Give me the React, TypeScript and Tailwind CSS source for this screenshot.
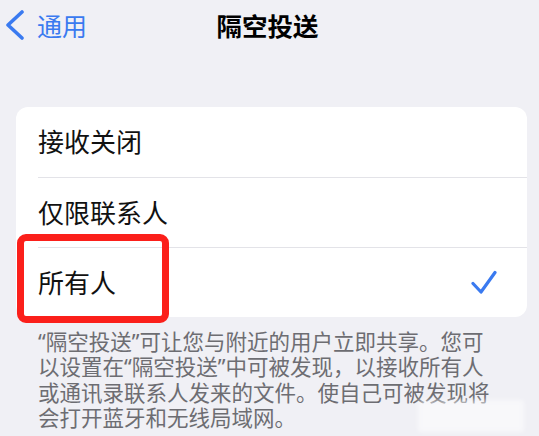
import React from "react";

const font = { fontFamily: '"Noto Sans CJK SC", "Noto Sans", sans-serif' };
const footerFont = { fontFamily: '"Noto Sans", "Noto Sans CJK SC", sans-serif' };

export default function App() {
  return (
    <div
      className="w-[539px] h-[436px] bg-[#f0f0f5] overflow-hidden relative"
      style={font}
    >
      {/* Nav bar */}
      <div className="relative h-[50px] flex items-center">
        <div className="flex items-center pl-[5px] gap-[12px] text-[#3a7af0]">
          <svg width="20" height="30" viewBox="0 0 20 30" className="mt-[-1px]">
            <polyline
              points="17,2 3,15 17,28"
              fill="none"
              stroke="currentColor"
              strokeWidth="3.6"
              strokeLinecap="round"
              strokeLinejoin="round"
            />
          </svg>
          <span className="text-[25px] leading-none">通用</span>
        </div>
        <div className="absolute inset-0 flex items-center justify-center pointer-events-none">
          <span className="text-[25.5px] font-bold leading-none text-black ml-[-4px]">
            隔空投送
          </span>
        </div>
      </div>

      {/* Card */}
      <div className="mt-[57px] mx-[16px] w-[511px] relative">
        <div className="bg-white rounded-[12px] overflow-hidden">
          <div className="h-[70px] flex items-center pl-[22px] pb-[2px]">
            <span className="text-[26px] leading-none text-[#111]">接收关闭</span>
          </div>
          <div className="h-[1px] bg-[#e3e3e8] ml-[22px]" />
          <div className="h-[69px] flex items-center pl-[22px] pb-[2px]">
            <span className="text-[26px] leading-none text-[#111]">仅限联系人</span>
          </div>
          <div className="h-[1px] bg-[#e3e3e8] ml-[22px]" />
          <div className="h-[69px] flex items-center justify-between pl-[22px] pr-[30px]">
            <span className="text-[26px] leading-none text-[#111] mb-[2px]">所有人</span>
            <svg width="26" height="26" viewBox="0 0 26 26">
              <polyline
                points="2,13.5 10,22 24,2.5"
                fill="none"
                stroke="#3a7af0"
                strokeWidth="3.2"
                strokeLinecap="round"
                strokeLinejoin="round"
              />
            </svg>
          </div>
        </div>
        {/* Red annotation box */}
        <div className="absolute left-[1px] top-[127px] w-[152px] h-[89px] border-[7px] border-[#fb1f1a] rounded-[9px]" />
      </div>

      {/* Footer */}
      <div
        className="mt-[12px] pl-[38px] text-[21.5px] leading-[25.3px] text-[#6d6d72] whitespace-nowrap"
        style={footerFont}
      >
        <div>“隔空投送”可让您与附近的用户立即共享。您可</div>
        <div>以设置在“隔空投送”中可被发现，以接收所有人</div>
        <div>或通讯录联系人发来的文件。使自己可被发现将</div>
        <div>会打开蓝牙和无线局域网。</div>
      </div>

      {/* faint watermark overlay */}
      <div className="absolute left-[418px] top-[400px] w-[106px] h-[32px] bg-white/50 blur-[2px]" />
    </div>
  );
}
